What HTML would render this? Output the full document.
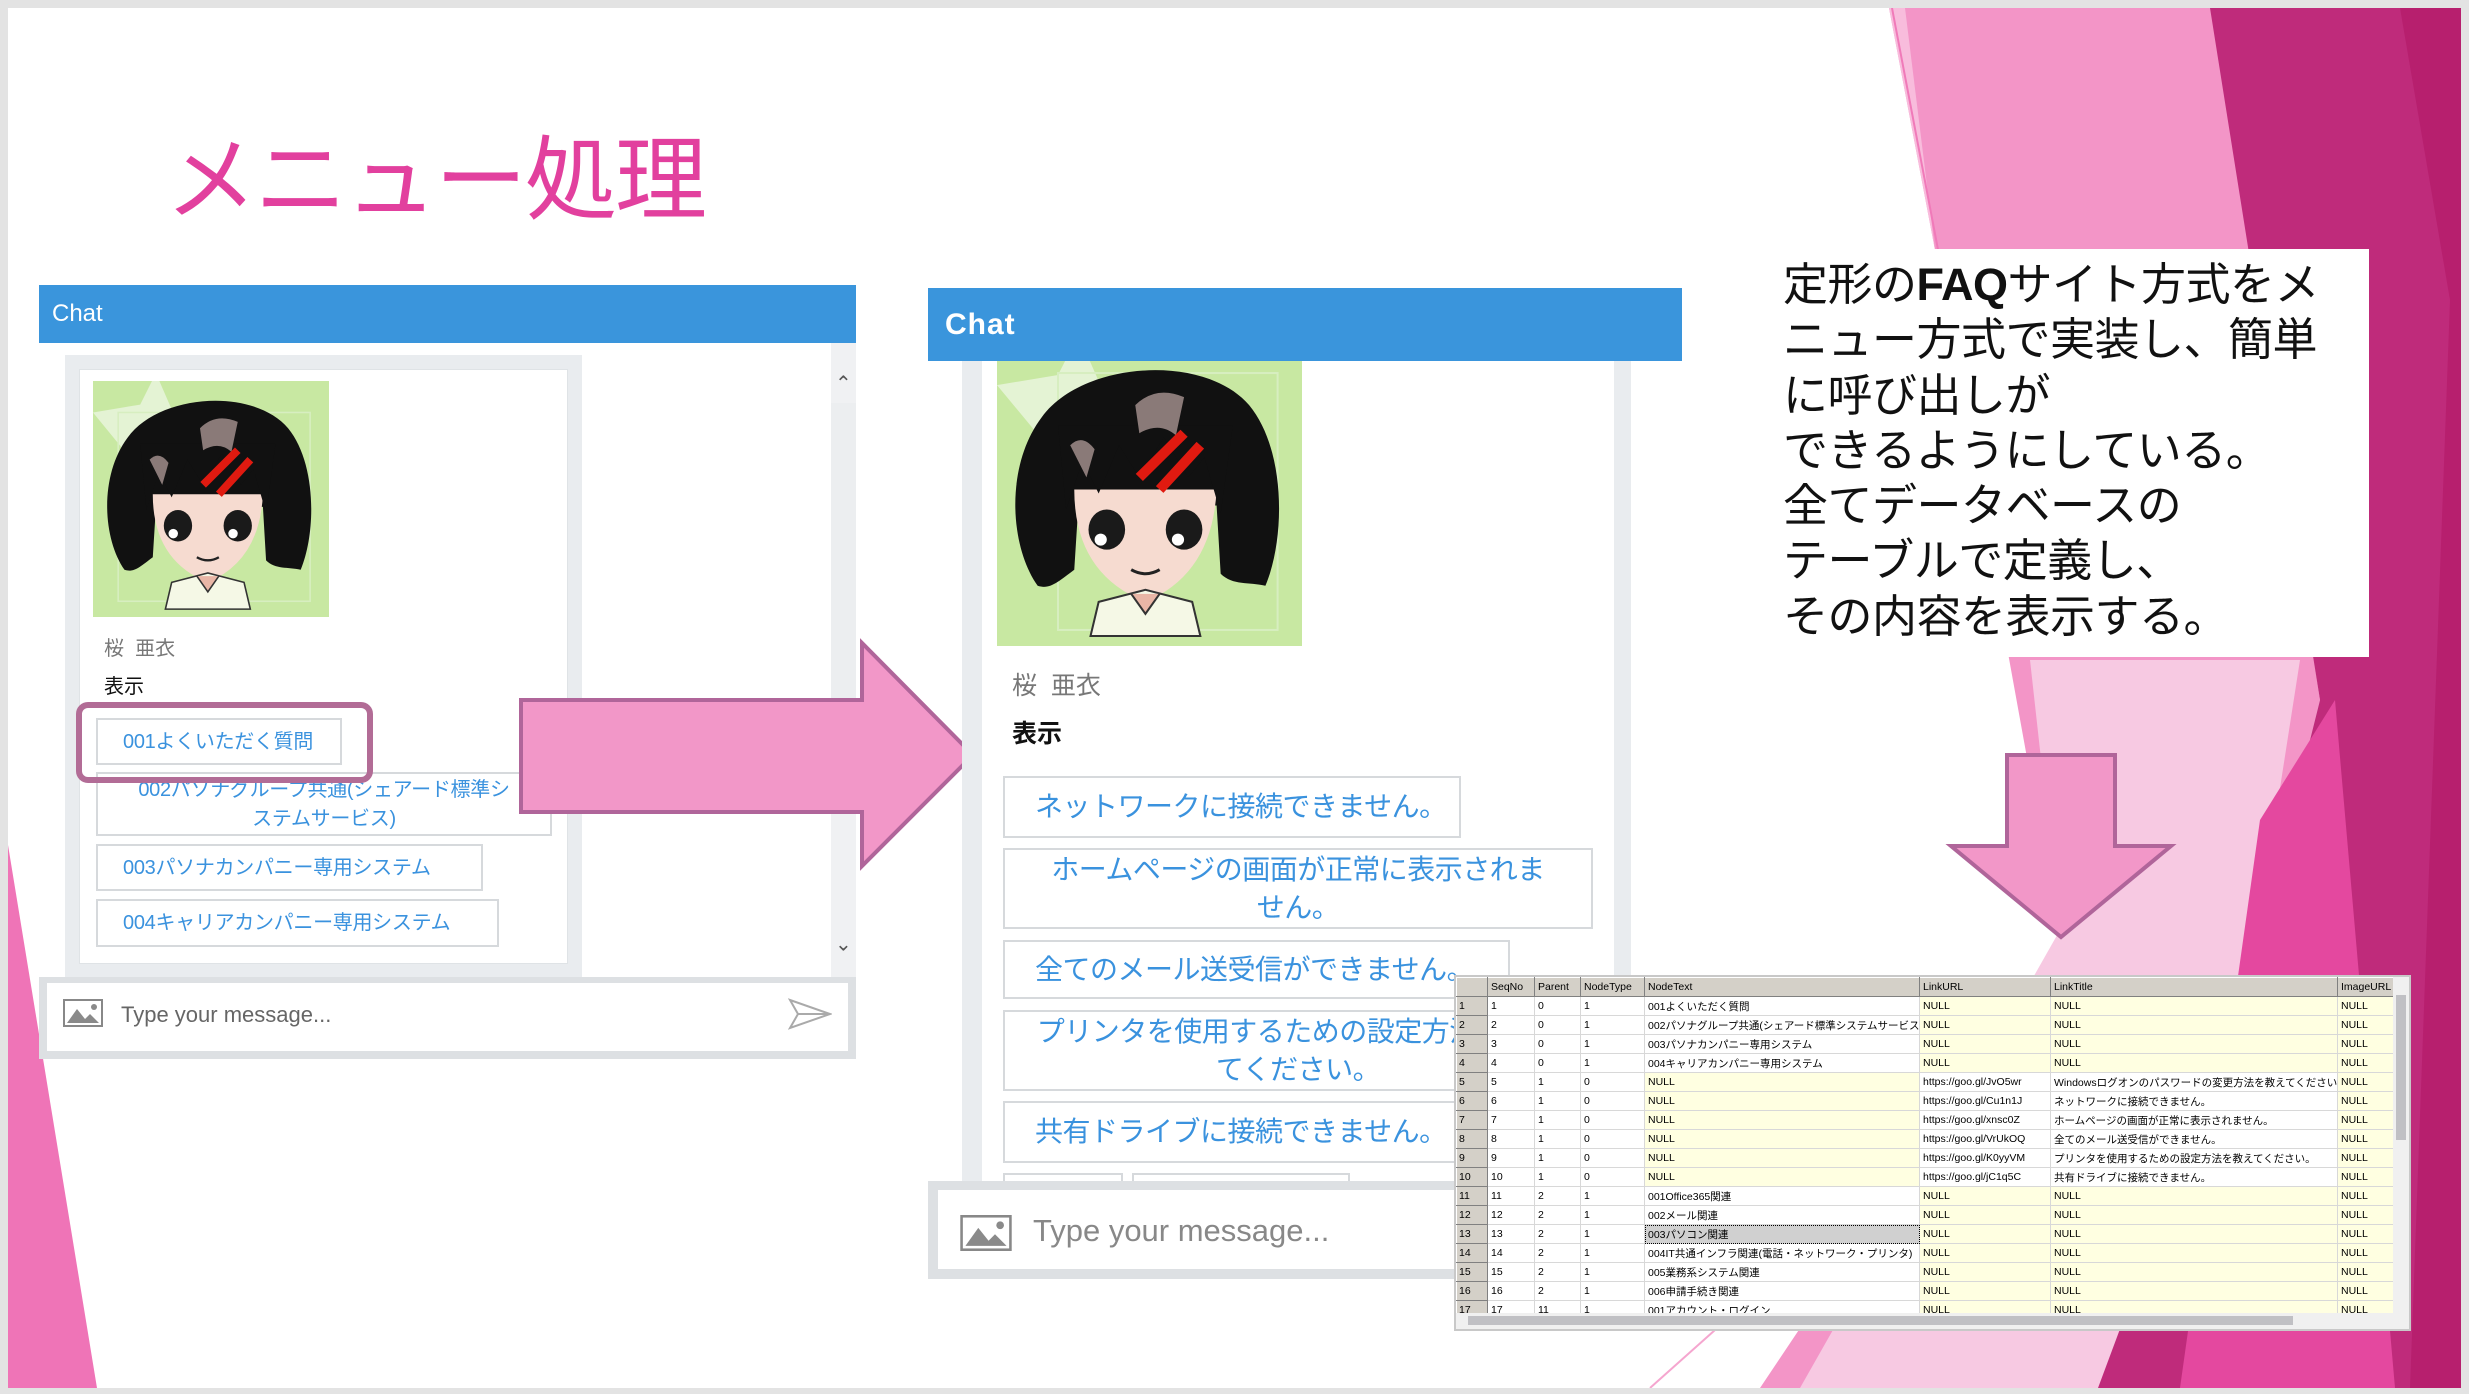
<!DOCTYPE html>
<html><head><meta charset="utf-8">
<style>
*{margin:0;padding:0;box-sizing:border-box}
body{width:2469px;height:1394px;background:#e3e3e3;position:relative;overflow:hidden;font-family:"Liberation Sans","Noto Sans CJK JP",sans-serif}
.abs{position:absolute}
#slide{position:absolute;left:8px;top:8px;width:2453px;height:1380px;background:#fff;overflow:hidden}
.jp{font-family:"Liberation Sans","Noto Sans CJK JP",sans-serif}
.btn{position:absolute;background:#fff;border:2px solid #d6d9dc;color:#3a92de;font-family:"Liberation Sans","Noto Sans CJK JP",sans-serif;white-space:nowrap;overflow:hidden}
.btnL{font-size:20px;line-height:28px;letter-spacing:-0.3px}
.btnM{font-size:28px;line-height:38px;letter-spacing:-0.5px}
table{border-collapse:collapse;table-layout:fixed;font-family:"Liberation Sans","Noto Sans CJK JP",sans-serif;font-size:10.5px}
td,th{height:19px;border:1px solid #d8d8d8;padding:0 3px;white-space:nowrap;overflow:hidden;text-align:left;font-weight:normal;color:#000}
th{background:#d4d0c8;border-color:#fff #808080 #808080 #fff}
td.rh{background:#d4d0c8;border-color:#fff #808080 #808080 #fff;padding-left:2px}
td.y{background:#ffffe1}
td.sel{background:#d0d0d0;outline:1px dotted #000;outline-offset:-1px}
</style></head><body>
<div id="slide">
<svg class="abs" style="left:0;top:0" width="2453" height="1380" viewBox="8 8 2453 1380">
<polygon points="8,845 97,1388 8,1388" fill="#ef74b7"/>
<polygon points="1889,8 2215,8 2320,700 2250,980 2098,1388 1760,1388 2060,940 1935,250" fill="#f395c7"/>
<polygon points="2030,660 2300,660 2250,980 2098,1388 1800,1388 2060,930" fill="#f7c9e2"/>
<polygon points="1935,250 1889,8 1905,8" fill="#f8bcdc"/>
<polygon points="2210,8 2461,8 2461,1388 2098,1388 2250,980 2320,700" fill="#bf2b7b"/>
<polygon points="2260,820 2335,700 2395,1388 2180,1388" fill="#e4489f"/>
<polygon points="2400,8 2461,8 2461,1388 2410,1388 2450,300" fill="#b71f6e"/>
<line x1="1892" y1="8" x2="1940" y2="260" stroke="#f07ab9" stroke-width="2"/>
<line x1="1650" y1="1388" x2="1715" y2="1330" stroke="#f5a6cf" stroke-width="2"/>
</svg>

<div class="abs jp" style="left:157px;top:118px;font-size:92px;line-height:110px;color:#e2409e;letter-spacing:-2px">メニュー処理</div>

<!-- Left chat -->
<div class="abs" style="left:31px;top:277px;width:817px;height:58px;background:#3a95dc;color:#fff;font-size:24px;line-height:58px;padding-left:13px">Chat</div>
<div class="abs" style="left:31px;top:335px;width:817px;height:634px;background:#fff"></div>
<div class="abs" style="left:823px;top:335px;width:25px;height:634px;background:#f0f1f3"></div>
<div class="abs" style="left:823px;top:395px;width:25px;height:300px;background:#eceef0"></div>
<div class="abs" style="left:827px;top:363px;font-size:20px;color:#555">&#x2303;</div>
<div class="abs" style="left:827px;top:922px;font-size:20px;color:#555;transform:rotate(180deg)">&#x2303;</div>
<div class="abs" style="left:57px;top:347px;width:517px;height:622px;background:#e9ecef"></div>
<div class="abs" style="left:71px;top:361px;width:489px;height:595px;background:#fff;border:1px solid #dfe3e6"></div>

<svg class="abs" style="left:85px;top:373px" width="236" height="236" viewBox="0 0 150 150">
<rect width="150" height="150" fill="#c8e8a2"/>
<polygon points="0,20 30,15 40,-5 50,18 80,22 55,40 62,70 38,52 10,68 18,42" fill="#e4f3d4"/>
<rect x="16" y="20" width="122" height="120" fill="none" stroke="#d7eec0" stroke-width="1"/>
<path d="M20,120 C6,100 4,60 22,36 C42,8 102,4 124,30 C142,52 142,96 132,120 C124,118 116,120 110,114 L108,80 L40,80 L38,112 C30,118 26,122 20,120 Z" fill="#111"/>
<path d="M38,72 Q38,114 73,128 Q106,114 108,72 Z" fill="#f6dbd0"/>
<path d="M34,82 L42,58 L50,74 L60,50 L70,66 L82,46 L94,66 L102,56 L110,84 L116,40 L30,40 Z" fill="#111"/>
<path d="M68,30 Q78,20 92,26 L88,45 Q80,38 70,44 Z" fill="#8a7a78"/>
<path d="M36,50 Q42,44 48,52 L44,66 Z" fill="#8a7a78"/>
<line x1="70" y1="66" x2="92" y2="44" stroke="#e01a10" stroke-width="5"/>
<line x1="80" y1="72" x2="100" y2="50" stroke="#e01a10" stroke-width="5"/>
<ellipse cx="54" cy="92" rx="9" ry="10" fill="#1a1a1a"/>
<ellipse cx="92" cy="92" rx="9" ry="10" fill="#1a1a1a"/>
<circle cx="51" cy="97" r="3" fill="#fff"/><circle cx="89" cy="97" r="3" fill="#fff"/>
<path d="M66,112 Q73,116 80,112" stroke="#222" stroke-width="1.5" fill="none"/>
<path d="M50,128 L73,122 L96,128 L100,145 L46,145 Z" fill="#f5f8e6" stroke="#333" stroke-width="1"/>
<path d="M66,124 L73,134 L80,124" fill="#e9b6a6" stroke="#333" stroke-width="1"/>
</svg>

<div class="abs" style="left:96px;top:626px;font-size:20px;color:#777;line-height:30px">桜&nbsp;&nbsp;亜衣</div>
<div class="abs" style="left:96px;top:664px;font-size:20px;color:#111;line-height:30px">表示</div>
<div class="btn btnL" style="left:88px;top:710px;width:246px;height:47px;padding:8px 0 0 25px">001よくいただく質問</div>
<div class="btn btnL" style="left:88px;top:764px;width:456px;height:64px;padding:2px 0 0 0;text-align:center;line-height:29px">002パソナグループ共通(シェアード標準シ<br>ステムサービス)</div>
<div class="btn btnL" style="left:88px;top:836px;width:387px;height:47px;padding:8px 0 0 25px">003パソナカンパニー専用システム</div>
<div class="btn btnL" style="left:88px;top:891px;width:403px;height:48px;padding:8px 0 0 25px">004キャリアカンパニー専用システム</div>
<div class="abs" style="left:68px;top:694px;width:297px;height:81px;border:6px solid #b26c96;border-radius:12px"></div>

<div class="abs" style="left:31px;top:969px;width:817px;height:82px;background:#dde0e3"></div>
<div class="abs" style="left:39px;top:975px;width:801px;height:68px;background:#fff"></div>
<svg class="abs" style="left:55px;top:991px" width="40" height="28" viewBox="0 0 40 28"><rect x="1" y="1" width="38" height="26" fill="#fff" stroke="#888" stroke-width="2"/><path d="M4,24 L14,10 L22,20 L27,15 L36,24 Z" fill="#8a8a8a"/><circle cx="31" cy="8" r="3" fill="#8a8a8a"/></svg>
<div class="abs" style="left:113px;top:992px;font-size:22px;color:#666;line-height:30px">Type your message...</div>
<svg class="abs" style="left:780px;top:990px" width="44" height="32" viewBox="0 0 44 32"><path d="M2,2 L42,16 L2,30 L10,16 Z M10,16 L42,16" fill="none" stroke="#aaa" stroke-width="2"/></svg>

<!-- Right arrow -->
<svg class="abs" style="left:500px;top:622px" width="480" height="250" viewBox="500 622 480 250">
<polygon points="513,692 854,692 854,635 965,747 854,858 854,804 513,804" fill="#f297c8" stroke="#b0659a" stroke-width="4"/>
</svg>

<!-- Middle chat -->
<div class="abs" style="left:920px;top:280px;width:754px;height:73px;background:#3a95dc;color:#fff;font-size:30px;font-weight:bold;line-height:73px;padding-left:17px;letter-spacing:1px">Chat</div>
<div class="abs" style="left:954px;top:353px;width:20px;height:820px;background:#e9ecef"></div>
<div class="abs" style="left:974px;top:353px;width:632px;height:820px;background:#fff"></div>
<div class="abs" style="left:1606px;top:353px;width:17px;height:820px;background:#e9ecef"></div>

<svg class="abs" style="left:989px;top:353px" width="305" height="285" viewBox="0 8 150 142" preserveAspectRatio="none">
<rect y="0" width="150" height="150" fill="#c8e8a2"/>
<polygon points="0,20 30,15 40,-5 50,18 80,22 55,40 62,70 38,52 10,68 18,42" fill="#e4f3d4"/>
<rect x="30" y="14" width="108" height="128" fill="none" stroke="#d7eec0" stroke-width="1"/>
<path d="M20,120 C6,100 4,60 22,36 C42,8 102,4 124,30 C142,52 142,96 132,120 C124,118 116,120 110,114 L108,80 L40,80 L38,112 C30,118 26,122 20,120 Z" fill="#111"/>
<path d="M38,72 Q38,114 73,128 Q106,114 108,72 Z" fill="#f6dbd0"/>
<path d="M34,82 L42,58 L50,74 L60,50 L70,66 L82,46 L94,66 L102,56 L110,84 L116,40 L30,40 Z" fill="#111"/>
<path d="M68,30 Q78,20 92,26 L88,45 Q80,38 70,44 Z" fill="#8a7a78"/>
<path d="M36,50 Q42,44 48,52 L44,66 Z" fill="#8a7a78"/>
<line x1="70" y1="66" x2="92" y2="44" stroke="#e01a10" stroke-width="5"/>
<line x1="80" y1="72" x2="100" y2="50" stroke="#e01a10" stroke-width="5"/>
<ellipse cx="54" cy="92" rx="9" ry="10" fill="#1a1a1a"/>
<ellipse cx="92" cy="92" rx="9" ry="10" fill="#1a1a1a"/>
<circle cx="51" cy="97" r="3" fill="#fff"/><circle cx="89" cy="97" r="3" fill="#fff"/>
<path d="M66,112 Q73,116 80,112" stroke="#222" stroke-width="1.5" fill="none"/>
<path d="M50,128 L73,122 L96,128 L100,145 L46,145 Z" fill="#f5f8e6" stroke="#333" stroke-width="1"/>
<path d="M66,124 L73,134 L80,124" fill="#e9b6a6" stroke="#333" stroke-width="1"/>
</svg>

<div class="abs" style="left:1004px;top:660px;font-size:25px;color:#777;line-height:36px">桜&nbsp;&nbsp;亜衣</div>
<div class="abs" style="left:1004px;top:708px;font-size:25px;color:#111;font-weight:bold;line-height:36px">表示</div>
<div class="btn btnM" style="left:995px;top:768px;width:458px;height:62px;padding:10px 0 0 30px">ネットワークに接続できません。</div>
<div class="btn btnM" style="left:995px;top:840px;width:590px;height:81px;text-align:center;padding-top:1px">ホームページの画面が正常に表示されま<br>せん。</div>
<div class="btn btnM" style="left:995px;top:932px;width:507px;height:59px;padding:9px 0 0 30px">全てのメール送受信ができません。</div>
<div class="btn btnM" style="left:995px;top:1002px;width:590px;height:81px;text-align:center;padding-top:1px">プリンタを使用するための設定方法を教え<br>てください。</div>
<div class="btn btnM" style="left:995px;top:1093px;width:590px;height:62px;padding:10px 0 0 30px">共有ドライブに接続できません。</div>
<div class="btn" style="left:995px;top:1165px;width:120px;height:20px"></div>
<div class="btn" style="left:1124px;top:1165px;width:218px;height:20px"></div>

<div class="abs" style="left:920px;top:1173px;width:540px;height:98px;background:#dde0e3"></div>
<div class="abs" style="left:930px;top:1182px;width:530px;height:79px;background:#fff"></div>
<svg class="abs" style="left:952px;top:1207px" width="52" height="36" viewBox="0 0 40 28"><rect x="1" y="1" width="38" height="26" fill="#fff" stroke="#888" stroke-width="2"/><path d="M4,24 L14,10 L22,20 L27,15 L36,24 Z" fill="#8a8a8a"/><circle cx="31" cy="8" r="3" fill="#8a8a8a"/></svg>
<div class="abs" style="left:1025px;top:1203px;font-size:31px;color:#888;line-height:40px">Type your message...</div>

<!-- Text box -->
<div class="abs jp" style="left:1739px;top:241px;width:622px;height:408px;background:#fff;padding:8px 0 0 36px;font-size:45px;line-height:55.3px;letter-spacing:-0.5px;color:#111;white-space:nowrap">定形の<b style="font-weight:bold">FAQ</b>サイト方式をメ<br>ニュー方式で実装し、簡単<br>に呼び出しが<br>できるようにしている。<br>全てデータベースの<br>テーブルで定義し、<br>その内容を表示する。</div>

<!-- Down arrow -->
<svg class="abs" style="left:1930px;top:735px" width="245" height="205" viewBox="1930 735 245 205">
<polygon points="1999,747 2107,747 2107,838 2163,838 2053,929 1943,838 1999,838" fill="#f297c8" stroke="#b0659a" stroke-width="4"/>
</svg>

<!-- DB table -->
<div class="abs" style="left:1446px;top:967px;width:957px;height:356px;background:#fff;border:2px solid #c8c8c8;overflow:hidden">
<div class="abs" style="left:0;top:0;width:937px;height:336px;overflow:hidden">
<table style="width:937px">
<colgroup><col style="width:31px"><col style="width:47px"><col style="width:46px"><col style="width:64px"><col style="width:275px"><col style="width:131px"><col style="width:287px"><col style="width:56px"></colgroup>
<tr><th></th><th>SeqNo</th><th>Parent</th><th>NodeType</th><th>NodeText</th><th>LinkURL</th><th>LinkTitle</th><th>ImageURL</th></tr>
<tr><td class="rh">1</td><td>1</td><td>0</td><td>1</td><td>001よくいただく質問</td><td class="y">NULL</td><td class="y">NULL</td><td class="y">NULL</td></tr>
<tr><td class="rh">2</td><td>2</td><td>0</td><td>1</td><td>002パソナグループ共通(シェアード標準システムサービス)</td><td class="y">NULL</td><td class="y">NULL</td><td class="y">NULL</td></tr>
<tr><td class="rh">3</td><td>3</td><td>0</td><td>1</td><td>003パソナカンパニー専用システム</td><td class="y">NULL</td><td class="y">NULL</td><td class="y">NULL</td></tr>
<tr><td class="rh">4</td><td>4</td><td>0</td><td>1</td><td>004キャリアカンパニー専用システム</td><td class="y">NULL</td><td class="y">NULL</td><td class="y">NULL</td></tr>
<tr><td class="rh">5</td><td>5</td><td>1</td><td>0</td><td class="y">NULL</td><td>https://goo.gl/JvO5wr</td><td>Windowsログオンのパスワードの変更方法を教えてください。</td><td class="y">NULL</td></tr>
<tr><td class="rh">6</td><td>6</td><td>1</td><td>0</td><td class="y">NULL</td><td>https://goo.gl/Cu1n1J</td><td>ネットワークに接続できません。</td><td class="y">NULL</td></tr>
<tr><td class="rh">7</td><td>7</td><td>1</td><td>0</td><td class="y">NULL</td><td>https://goo.gl/xnsc0Z</td><td>ホームページの画面が正常に表示されません。</td><td class="y">NULL</td></tr>
<tr><td class="rh">8</td><td>8</td><td>1</td><td>0</td><td class="y">NULL</td><td>https://goo.gl/VrUkOQ</td><td>全てのメール送受信ができません。</td><td class="y">NULL</td></tr>
<tr><td class="rh">9</td><td>9</td><td>1</td><td>0</td><td class="y">NULL</td><td>https://goo.gl/K0yyVM</td><td>プリンタを使用するための設定方法を教えてください。</td><td class="y">NULL</td></tr>
<tr><td class="rh">10</td><td>10</td><td>1</td><td>0</td><td class="y">NULL</td><td>https://goo.gl/jC1q5C</td><td>共有ドライブに接続できません。</td><td class="y">NULL</td></tr>
<tr><td class="rh">11</td><td>11</td><td>2</td><td>1</td><td>001Office365関連</td><td class="y">NULL</td><td class="y">NULL</td><td class="y">NULL</td></tr>
<tr><td class="rh">12</td><td>12</td><td>2</td><td>1</td><td>002メール関連</td><td class="y">NULL</td><td class="y">NULL</td><td class="y">NULL</td></tr>
<tr><td class="rh">13</td><td>13</td><td>2</td><td>1</td><td class="sel">003パソコン関連</td><td class="y">NULL</td><td class="y">NULL</td><td class="y">NULL</td></tr>
<tr><td class="rh">14</td><td>14</td><td>2</td><td>1</td><td>004IT共通インフラ関連(電話・ネットワーク・プリンタ)</td><td class="y">NULL</td><td class="y">NULL</td><td class="y">NULL</td></tr>
<tr><td class="rh">15</td><td>15</td><td>2</td><td>1</td><td>005業務系システム関連</td><td class="y">NULL</td><td class="y">NULL</td><td class="y">NULL</td></tr>
<tr><td class="rh">16</td><td>16</td><td>2</td><td>1</td><td>006申請手続き関連</td><td class="y">NULL</td><td class="y">NULL</td><td class="y">NULL</td></tr>
<tr><td class="rh">17</td><td>17</td><td>11</td><td>1</td><td>001アカウント・ログイン</td><td class="y">NULL</td><td class="y">NULL</td><td class="y">NULL</td></tr>
</table>
</div>
<div class="abs" style="left:937px;top:0;width:16px;height:336px;background:#f0f0f0"></div>
<div class="abs" style="left:940px;top:18px;width:10px;height:145px;background:#c0c0c4"></div>
<div class="abs" style="left:0;top:336px;width:953px;height:16px;background:#f0f0f0"></div>
<div class="abs" style="left:12px;top:339px;width:825px;height:9px;background:#c0c0c4"></div>
</div>

</div>
</body></html>
